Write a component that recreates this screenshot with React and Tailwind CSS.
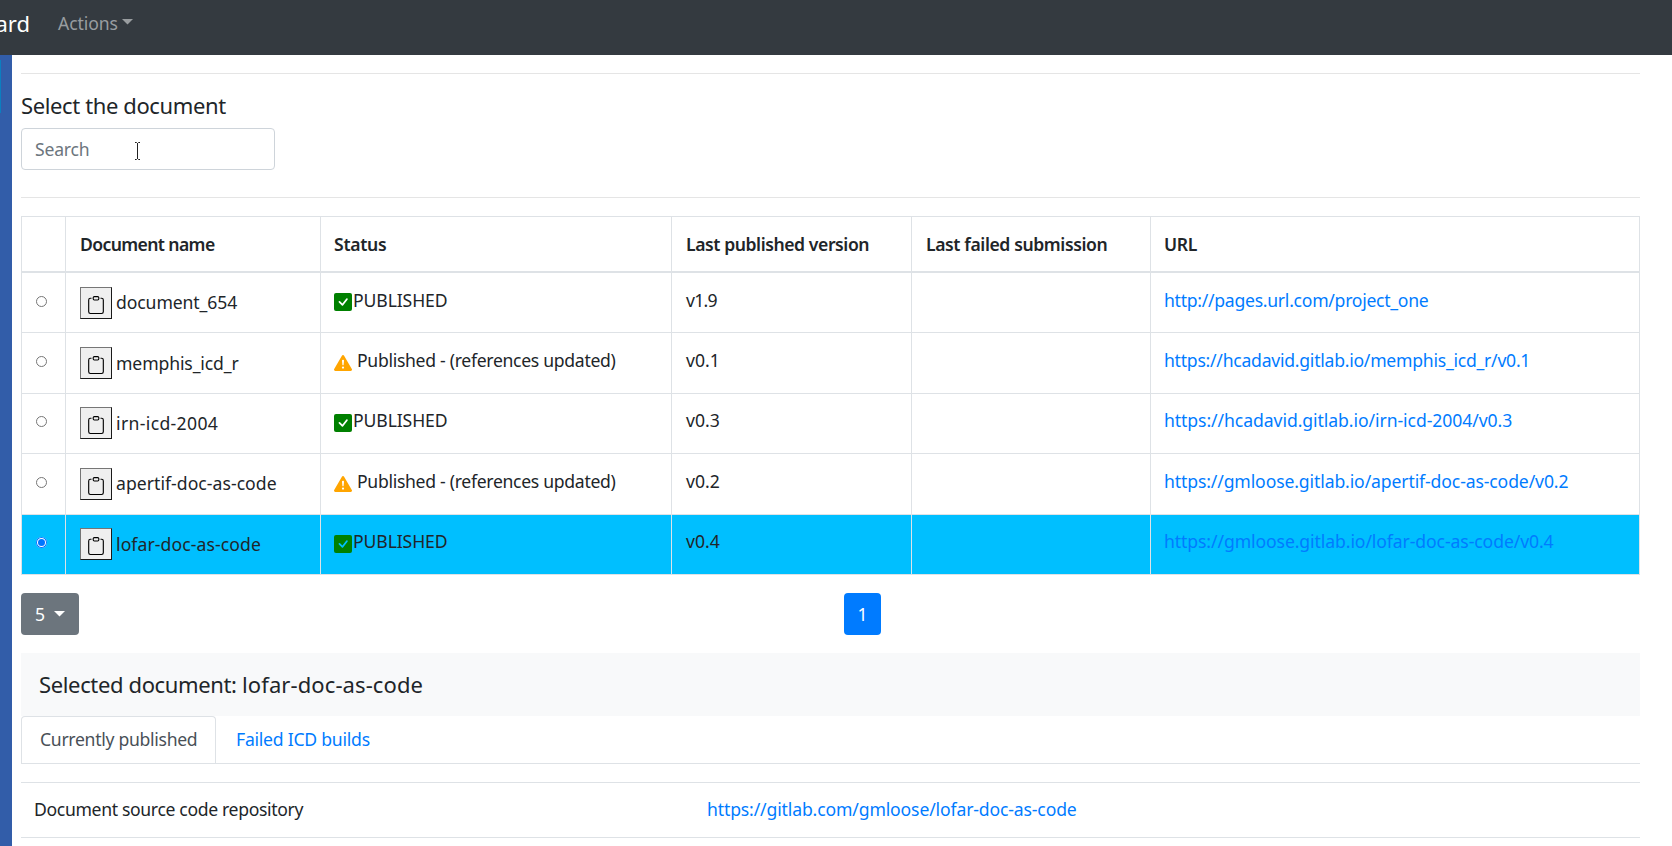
import React from "react";
import { BsClipboard, BsExclamationTriangleFill, BsCheck } from "react-icons/bs";

const rows = [
  { name: "document_654", namePos: "pt-[16px] tracking-[-0.1px]", ok: true, version: "v1.9", versionGap: "tracking-[-0.7px]", url: "http://pages.url.com/project_one", urlGap: "tracking-[-0.27px]", h: "h-[60px]" },
  { name: "memphis_icd_r", namePos: "pt-[17px] tracking-[-0.12px]", ok: false, version: "v0.1", url: "https://hcadavid.gitlab.io/memphis_icd_r/v0.1", urlGap: "tracking-[-0.25px]", h: "h-[61px]" },
  { name: "irn-icd-2004", namePos: "pt-[16px] tracking-[0.35px]", ok: true, version: "v0.3", url: "https://hcadavid.gitlab.io/irn-icd-2004/v0.3", urlGap: "tracking-[-0.07px]", h: "h-[60px]", tight: true },
  { name: "apertif-doc-as-code", namePos: "pt-[16px] tracking-[0.04px]", ok: false, version: "v0.2", url: "https://gmloose.gitlab.io/apertif-doc-as-code/v0.2", urlGap: "tracking-[-0.12px]", h: "h-[61px]" },
  { name: "lofar-doc-as-code", namePos: "pt-[16px] tracking-[0.09px]", ok: true, version: "v0.4", url: "https://gmloose.gitlab.io/lofar-doc-as-code/v0.4", urlGap: "tracking-[-0.09px]", h: "h-[60px]", tight: true, selected: true },
];

const headers = [
  { label: "", pos: "" },
  { label: "Document name", pos: "pl-[14px] tracking-[-0.62px]" },
  { label: "Status", pos: "pl-[13px] tracking-[-0.3px]" },
  { label: "Last published version", pos: "pl-[14px] tracking-[-0.43px]" },
  { label: "Last failed submission", pos: "pl-[14px] tracking-[-0.4px]" },
  { label: "URL", pos: "pl-[13px] tracking-[-0.4px]" },
];

const columns = "grid grid-cols-[44px_255px_351px_240px_239px_489px]";
const cell = "border-r border-b border-[#dee2e6]";

function ClipboardButton() {
  return (
    <button className="flex h-8 w-8 shrink-0 items-start border border-t-[#767676] border-r-[#1a1a1a] border-b-[#1a1a1a] border-l-[#767676] bg-[#efefef] pt-2 pl-[6px] text-black">
      <BsClipboard size={18} />
    </button>
  );
}

function PublishedIcon({ selected }) {
  return (
    <span className={`mt-[20px] block h-[18px] w-[18px] rounded-[2px] bg-[#008000] ${selected ? "text-[#00bfff]" : "text-white"}`}>
      <BsCheck size={18} />
    </span>
  );
}

function WarningIcon() {
  return <BsExclamationTriangleFill size={18} className="mt-[21px] text-[#ffa500]" />;
}

function Radio({ checked }) {
  return checked ? (
    <span className="flex h-[11px] w-[11px] items-center justify-center rounded-full bg-white ring-1 ring-[#0075ff] ring-inset">
      <span className="h-[7px] w-[7px] rounded-full bg-[#0075ff]" />
    </span>
  ) : (
    <span className="block h-[11px] w-[11px] rounded-full border border-[#767676] bg-white" />
  );
}

function DocumentRow({ row }) {
  const textTop = row.tight ? "pt-[13px]" : "pt-[14px]";
  return (
    <div className={`${columns} ${row.h} ${row.selected ? "bg-[#00bfff]" : ""}`}>
      <div className={`${cell} ${row.tight ? "pt-[22px]" : "pt-[23px]"} pl-[14px]`}><Radio checked={row.selected} /></div>
      <div className={`${cell} flex items-start gap-[4px] pl-[14px]`}>
        <span className={textTop}><ClipboardButton /></span>
        <span className={row.namePos}>{row.name}</span>
      </div>
      <div className={`${cell} flex items-start pl-[13px]`}>
        {row.ok ? <PublishedIcon selected={row.selected} /> : <WarningIcon />}
        <span className={`${textTop} ${row.ok ? "pl-px tracking-[-0.1px]" : "pl-[5px] tracking-[-0.3px]"}`}>{row.ok ? "PUBLISHED" : "Published - (references updated)"}</span>
      </div>
      <div className={`${cell} ${textTop} pl-[14px] ${row.versionGap || ""}`}>{row.version}</div>
      <div className={cell} />
      <div className={`${cell} ${textTop} pl-[13px] text-[#007bff] ${row.urlGap}`}>{row.url}</div>
    </div>
  );
}

export default function App() {
  return (
    <div className="flex h-[846px] w-[1672px] flex-col overflow-hidden bg-white font-['Noto_Sans',sans-serif] text-[17.6px] leading-[26px] text-[#212529]">
      <nav className="flex h-[55px] shrink-0 items-start bg-[#343a40]">
        <span className="flex w-[30px] justify-end pt-[9px] text-[22px] leading-[28px] text-white">ard</span>
        <span className="ml-[28px] flex items-center gap-[4px] pt-[10px] tracking-[-0.1px] text-[#999da0]">
          Actions
          <svg className="-mt-[2px]" width="11" height="6" viewBox="0 0 11 6" fill="#999da0"><path d="M0 0h11L5.500 5.500z" /></svg>
        </span>
      </nav>
      <div className="flex min-h-0 flex-1">
        <aside className="w-[12px] shrink-0 bg-[#325da9] pt-[5px]">
          <div className="h-[53px] w-px bg-[#0b7fc0]" />
        </aside>
        <main className="ml-[9px] w-[1619px] shrink-0 pt-[18px]">
          <hr className="border-[#e5e5e5]" />
          <h5 className="mt-[18px] h-[27px] text-[22px] leading-[26px] tracking-[-0.38px]">Select the document</h5>
          <div className="mt-[9px] flex h-[42px] w-[254px] items-center rounded-[4px] border border-[#ced4da] pl-[13px] text-[#6c757d]">
            <span className="w-[99px] tracking-[-0.2px]">Search</span>
            <svg className="mt-1" width="7" height="18" viewBox="0 0 7 18" fill="none" stroke="#222" strokeWidth="1">
              <path d="M1 .5h1.500l1 1 1-1H6M3.500 1v16M1 17.500h1.500l1-1 1 1H6" />
            </svg>
          </div>
          <hr className="mt-[27px] border-[#e5e5e5]" />
          <section className="mt-[18px] border-t border-l border-[#dee2e6]">
            <div className={`${columns} h-[56px] font-semibold`}>
              {headers.map((h, i) => (
                <div key={i} className={`border-r border-b-2 border-[#dee2e6] pt-[14px] whitespace-nowrap ${h.pos}`}>{h.label}</div>
              ))}
            </div>
            {rows.map((row) => <DocumentRow key={row.name} row={row} />)}
          </section>
          <div className="mt-[18px] flex items-center">
            <button className="flex h-[42px] w-[58px] items-center gap-[9px] rounded-[4px] bg-[#6c757d] pl-[14px] text-white">
              5
              <svg className="-mt-px" width="11" height="6" viewBox="0 0 11 6" fill="#fff"><path d="M0 0h11L5.500 5.500z" /></svg>
            </button>
            <button className="ml-[765px] h-[42px] w-[37px] rounded-[4px] bg-[#007bff] text-white">1</button>
          </div>
          <h5 className="mt-[18px] flex h-[63px] bg-[#f8f9fa] pt-[18px] pl-[18px] text-[22px] leading-[26px] whitespace-pre">
            <span className="tracking-[-0.36px]">Selected document: </span>
            <span className="tracking-[0.1px]">lofar-doc-as-code</span>
          </h5>
          <div className="flex h-[48px] border-b border-[#dee2e6]">
            <div className="w-[195px] rounded-t-[4px] border border-b-0 border-[#dee2e6] pt-[9px] pl-[18px] tracking-[-0.3px] text-[#495057]">Currently published</div>
            <div className="pt-[10px] pl-[20px] tracking-[-0.24px] text-[#007bff]">Failed ICD builds</div>
          </div>
          <div className="mt-[18px] flex h-[56px] border-y border-[#dee2e6] pt-[13px]">
            <div className="w-[686px] pl-[13px] tracking-[-0.34px]">Document source code repository</div>
            <div className="tracking-[-0.14px] text-[#007bff]">https://gitlab.com/gmloose/lofar-doc-as-code</div>
          </div>
        </main>
      </div>
    </div>
  );
}
